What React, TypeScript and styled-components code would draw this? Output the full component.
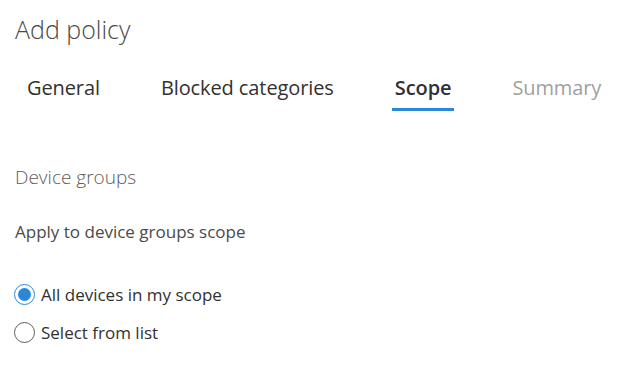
import React, { useState } from "react";
import styled, { createGlobalStyle } from "styled-components";

const Global = createGlobalStyle`
  html, body { margin: 0; padding: 0; background: #ffffff; }
  body { font-family: "Open Sans", "Noto Sans", "Liberation Sans", sans-serif; color: #323130; }
`;

const Page = styled.div`
  width: 639px;
  height: 380px;
  box-sizing: border-box;
  padding: 12px 0 0 15px;
  background: #fff;
  overflow: hidden;
`;

const Title = styled.h1`
  margin: 0;
  font-size: 25px;
  font-weight: 300;
  line-height: 34px;
  color: #4a4a4a;
`;

const TabRow = styled.div`
  display: flex;
  gap: 55px;
  margin-top: 28px;
  padding-left: 9px;
`;

const Tab = styled.div<{ $active?: boolean; $disabled?: boolean }>`
  position: relative;
  padding: 0 3px;
  height: 37px;
  font-size: 20px;
  line-height: 28px;
  font-weight: ${(p) => (p.$active ? 600 : 400)};
  color: ${(p) => (p.$disabled ? "#a19f9d" : "#323130")};
  letter-spacing: -0.1px;
  &::after {
    content: "";
    display: ${(p) => (p.$active ? "block" : "none")};
    position: absolute;
    left: 0;
    right: 0;
    bottom: 0;
    height: 3px;
    background: #2b88d8;
  }
`;

const SectionTitle = styled.h2`
  margin: 53px 0 0;
  font-size: 19px;
  font-weight: 300;
  line-height: 26px;
  color: #605e5c;
`;

const Label = styled.div`
  margin-top: 30px;
  font-size: 17px;
  line-height: 24px;
  color: #4a4a4a;
`;

const Options = styled.div`
  display: flex;
  flex-direction: column;
  gap: 16px;
  margin-top: 39px;
`;

const Option = styled.label`
  display: flex;
  align-items: center;
  gap: 6px;
  height: 22px;
  font-size: 17px;
  color: #323130;
  cursor: pointer;
  margin-left: -1px;
`;

const Circle = styled.span<{ $checked?: boolean }>`
  box-sizing: border-box;
  width: 21px;
  height: 21px;
  border-radius: 50%;
  border: ${(p) => (p.$checked ? "1.5px solid #2b88d8" : "1px solid #605e5c")};
  display: flex;
  align-items: center;
  justify-content: center;
  &::after {
    content: "";
    display: ${(p) => (p.$checked ? "block" : "none")};
    width: 13px;
    height: 13px;
    border-radius: 50%;
    background: #2b88d8;
  }
`;

export default function App() {
  const [value, setValue] = useState("all");
  return (
    <>
      <Global />
      <Page>
        <Title>Add policy</Title>
        <TabRow>
          <Tab>General</Tab>
          <Tab>Blocked categories</Tab>
          <Tab $active>Scope</Tab>
          <Tab $disabled>Summary</Tab>
        </TabRow>
        <SectionTitle>Device groups</SectionTitle>
        <Label>Apply to device groups scope</Label>
        <Options>
          <Option onClick={() => setValue("all")}>
            <Circle $checked={value === "all"} />
            All devices in my scope
          </Option>
          <Option onClick={() => setValue("list")}>
            <Circle $checked={value === "list"} />
            Select from list
          </Option>
        </Options>
      </Page>
    </>
  );
}
